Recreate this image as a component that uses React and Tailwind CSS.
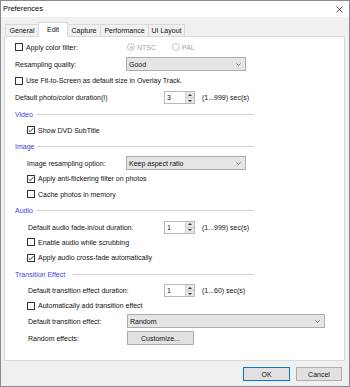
import React from "react";

function Check({ checked }) {
  return (
    <span className="w-[8px] h-[8px] border border-[#333333] bg-white flex items-center justify-center shrink-0">
      {checked && (
        <svg width="6" height="6" viewBox="0 0 6 6">
          <path d="M0.6 3.1 L2.3 4.7 L5.4 1.1" fill="none" stroke="#222" strokeWidth="0.9" />
        </svg>
      )}
    </span>
  );
}

function Chevron() {
  return (
    <svg width="5" height="3" viewBox="0 0 5 3" className="shrink-0">
      <path d="M0.3 0.3 L2.5 2.5 L4.7 0.3" fill="none" stroke="#555" strokeWidth="0.7" />
    </svg>
  );
}

function Select({ value, w }) {
  return (
    <div className={`flex items-center justify-between h-[14px] ${w} bg-[#e5e5e5] border border-[#adadad] pl-[2px] pr-[4px]`}>
      <span>{value}</span>
      <Chevron />
    </div>
  );
}

function Spin({ value }) {
  return (
    <div className="flex h-[13px] w-[31px] border border-[#b9b9b9] bg-white shrink-0">
      <div className="flex-1 pl-[2px] flex items-center">{value}</div>
      <div className="w-[9px] border-l border-[#d6d6d6] bg-[#e6e6e6] flex flex-col">
        <div className="flex-1 flex items-center justify-center border-b border-[#cfcfcf]">
          <svg width="4" height="2" viewBox="0 0 4 2"><path d="M0 2 L2 0 L4 2Z" fill="#333" /></svg>
        </div>
        <div className="flex-1 flex items-center justify-center">
          <svg width="4" height="2" viewBox="0 0 4 2"><path d="M0 0 L2 2 L4 0Z" fill="#333" /></svg>
        </div>
      </div>
    </div>
  );
}

function Header({ text, ml }) {
  return (
    <div className="flex items-center w-[239px] text-[#4141e0]">
      <span>{text}</span>
      <div className={`flex-1 h-[1px] bg-[#cfcfcf] ${ml}`} />
    </div>
  );
}

function CheckRow({ checked, text, indent }) {
  return (
    <div className={`flex items-center gap-[3px] ${indent}`}>
      <Check checked={checked} />
      <span>{text}</span>
    </div>
  );
}

export default function App() {
  return (
    <div className="w-[350px] h-[387px] border border-[#8a8a8a] bg-[#f0f0f0] flex flex-col font-['Liberation_Sans',Arial,sans-serif] text-[7px] text-[#111] leading-none overflow-hidden">
      {/* title bar */}
      <div className="h-[16px] bg-white flex items-center justify-between pl-[2px] pr-[6px] shrink-0">
        <span className="text-[7.4px] text-black">Preferences</span>
        <svg width="7" height="7" viewBox="0 0 7 7">
          <path d="M0.5 0.5 L6.5 6.5 M6.5 0.5 L0.5 6.5" stroke="#333" strokeWidth="0.8" />
        </svg>
      </div>

      {/* tabs */}
      <div className="h-[19px] flex items-end pl-[4px] shrink-0 relative z-10">
        <div className="h-[12px] w-[33px] border-t border-l border-[#d9d9d9] flex items-center justify-center">General</div>
        <div className="h-[15px] w-[30px] -mb-[1px] border-t border-l border-r border-[#d9d9d9] bg-white flex items-start justify-center pt-[3px]">Edit</div>
        <div className="h-[12px] w-[32px] border-t border-[#d9d9d9] flex items-center justify-center">Capture</div>
        <div className="h-[12px] w-[48px] border-t border-l border-[#d9d9d9] flex items-center justify-center">Performance</div>
        <div className="h-[12px] w-[37px] border-t border-l border-r border-[#d9d9d9] flex items-center justify-center">UI Layout</div>
      </div>

      {/* panel */}
      <div className="h-[325px] ml-[3px] mr-[4px] bg-white border border-[#d9d9d9] pt-[1px] pl-[10px] flex flex-col shrink-0">
        <div className="h-[18px] flex items-center">
          <div className="w-[112px] flex items-center gap-[3px]">
            <Check />
            <span>Apply color filter:</span>
          </div>
          <div className="w-[45px] flex items-center gap-[2px] text-[#a3a3a3]">
            <span className="w-[8px] h-[8px] rounded-full border border-[#c4c4c4] flex items-center justify-center">
              <span className="w-[3px] h-[3px] rounded-full bg-[#c4c4c4]" />
            </span>
            <span>NTSC</span>
          </div>
          <div className="flex items-center gap-[2px] text-[#a3a3a3]">
            <span className="w-[8px] h-[8px] rounded-full border border-[#c4c4c4]" />
            <span>PAL</span>
          </div>
        </div>
        <div className="h-[16px] flex items-center">
          <span className="w-[111px]">Resampling quality:</span>
          <Select value="Good" w="w-[120px]" />
        </div>
        <div className="h-[17px] flex items-center">
          <CheckRow text="Use Fit-to-Screen as default size in Overlay Track." />
        </div>
        <div className="h-[17px] flex items-center">
          <span className="w-[149px]">Default photo/color duration(I)</span>
          <Spin value="3" />
          <span className="ml-[7px]">(1...999) sec(s)</span>
        </div>

        <div className="h-[16px] flex items-center">
          <Header text="Video" ml="ml-[4px]" />
        </div>
        <div className="h-[16px] flex items-center">
          <CheckRow checked text="Show DVD SubTitle" indent="ml-[12px]" />
        </div>

        <div className="h-[17px] flex items-center">
          <Header text="Image" ml="ml-[3px]" />
        </div>
        <div className="h-[16px] flex items-center pl-[12px]">
          <span className="w-[99px]">Image resampling option:</span>
          <Select value="Keep aspect ratio" w="w-[120px]" />
        </div>
        <div className="h-[15px] flex items-center">
          <CheckRow checked text="Apply anti-flickering filter on photos" indent="ml-[12px]" />
        </div>
        <div className="h-[16px] flex items-center">
          <CheckRow text="Cache photos in memory" indent="ml-[12px]" />
        </div>

        <div className="h-[17px] flex items-center">
          <Header text="Audio" ml="ml-[4px]" />
        </div>
        <div className="h-[16px] flex items-center pl-[13px]">
          <span className="w-[136px]">Default audio fade-in/out duration:</span>
          <Spin value="1" />
          <span className="ml-[7px]">(1...999) sec(s)</span>
        </div>
        <div className="h-[14px] flex items-center">
          <CheckRow text="Enable audio while scrubbing" indent="ml-[12px]" />
        </div>
        <div className="h-[17px] flex items-center">
          <CheckRow checked text="Apply audio cross-fade automatically" indent="ml-[12px]" />
        </div>

        <div className="h-[17px] flex items-center">
          <Header text="Transition Effect" ml="ml-[8px]" />
        </div>
        <div className="h-[15px] flex items-center pl-[13px]">
          <span className="w-[136px]">Default transition effect duration:</span>
          <Spin value="1" />
          <span className="ml-[7px]">(1...60) sec(s)</span>
        </div>
        <div className="h-[15px] flex items-center">
          <CheckRow text="Automatically add transition effect" indent="ml-[12px]" />
        </div>
        <div className="h-[16px] flex items-center pl-[13px]">
          <span className="w-[99px]">Default transition effect:</span>
          <Select value="Random" w="w-[198px]" />
        </div>
        <div className="h-[18px] flex items-center pl-[13px]">
          <span className="w-[99px]">Random effects:</span>
          <div className="h-[14px] w-[67px] bg-[#e1e1e1] border border-[#adadad] flex items-center justify-center">Customize...</div>
        </div>
      </div>

      {/* buttons */}
      <div className="h-[14px] mt-[6px] flex justify-end gap-[6px] pr-[7px] shrink-0">
        <div className="w-[47px] h-[14px] bg-[#e1e1e1] border border-[#0078d7] flex items-center justify-center">OK</div>
        <div className="w-[46px] h-[14px] bg-[#e1e1e1] border border-[#adadad] flex items-center justify-center">Cancel</div>
      </div>
    </div>
  );
}
